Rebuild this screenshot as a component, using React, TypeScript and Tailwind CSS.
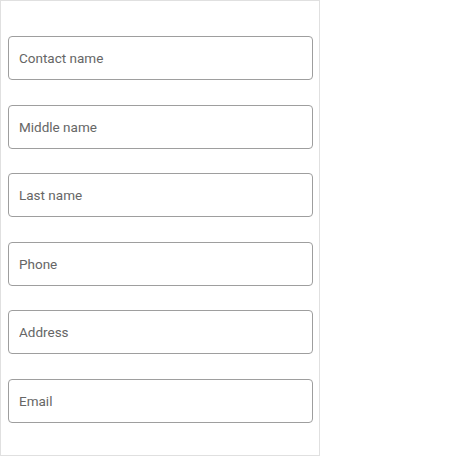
const fields = ["Contact name", "Middle name", "Last name", "Phone", "Address", "Email"];

export default function App() {
  return (
    <div className="w-[320px] h-[456px] border border-[#e0e0e0] bg-white px-[7px] pt-[35px] font-['Roboto',sans-serif]">
      <div className="flex flex-col gap-[24.6px]">
        {fields.map((f) => (
          <input
            key={f}
            placeholder={f}
            className="h-[44px] w-[305px] rounded-[4px] border border-[#9e9e9e] px-[10px] text-[13.5px] text-[#333] placeholder:text-[#666] outline-none"
          />
        ))}
      </div>
    </div>
  );
}
